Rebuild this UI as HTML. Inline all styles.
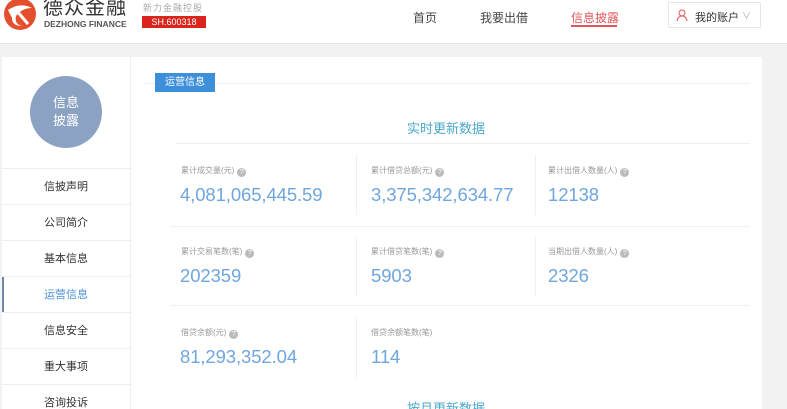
<!DOCTYPE html><html><head><meta charset="utf-8"><style>
*{margin:0;padding:0;box-sizing:border-box}
html,body{width:787px;height:409px;overflow:hidden}
body{background:#f2f2f2;font-family:"Liberation Sans","Noto Sans CJK SC",sans-serif;position:relative}
.a{position:absolute}
.hdr{left:0;top:0;width:787px;height:44px;background:#fff;border-bottom:1px solid #e4e4e4}
.nav{font-size:12px;color:#444;top:9px}
.side{left:2px;top:57px;width:128px;height:360px;background:#fff}
.main{left:130px;top:57px;width:632px;height:360px;background:#fff;border-left:1px solid #eee}
.mi{left:2px;width:128px;height:36px;border-top:1px solid #eee;font-size:11px;color:#333;text-align:center;line-height:36px}
.lb{font-size:8px;color:#999}
.lb i{display:inline-block;width:9px;height:9px;border-radius:50%;background:#bbb;color:#fff;font-style:normal;font-size:7px;text-align:center;line-height:9px;margin-left:3px;vertical-align:-1px}
.v{font-size:18.5px;color:#6fa6de;letter-spacing:-0.1px}
.hl{height:1px;background:#f0f0f0}
.vl{width:1px;background:#f0f0f0}
</style></head><body>
<div class="a hdr"></div>
<svg class="a" style="left:2px;top:-4px" width="36" height="36" viewBox="0 0 36 36"><circle cx="18" cy="18" r="16" fill="#e4502e"/><path d="M6 14 Q18 6 30 12 Q20 12 14 20 Q12 28 20 30 Q10 30 10 22" fill="#fff"/><path d="M14 14 L26 28" stroke="#fff" stroke-width="3"/></svg>
<div class="a" style="left:43px;top:-3px;font-size:20px;line-height:22px;color:#333;letter-spacing:1px">德众金融</div>
<div class="a" style="left:44px;top:20px;font-size:8.5px;line-height:9px;color:#555;font-weight:bold">DEZHONG FINANCE</div>
<div class="a" style="left:143px;top:1px;font-size:9px;color:#aaa;letter-spacing:1px">新力金融控股</div>
<div class="a" style="left:142px;top:16px;width:64px;height:12px;background:#d9251c;color:#fff;font-size:9px;text-align:center;line-height:12px">SH.600318</div>
<div class="a nav" style="left:413px">首页</div>
<div class="a nav" style="left:480px">我要出借</div>
<div class="a nav" style="left:571px;color:#e0555a">信息披露</div>
<div class="a" style="left:571px;top:25px;width:46px;height:2px;background:#e0555a"></div>
<div class="a" style="left:668px;top:2px;width:93px;height:26px;border:1px solid #e6e6e6;border-radius:2px;background:#fff"></div>
<svg class="a" style="left:676px;top:9px" width="12" height="12" viewBox="0 0 12 12"><circle cx="6" cy="4" r="3" fill="none" stroke="#e0555a"/><path d="M1 12 Q2 7 6 7 Q10 7 11 12" fill="none" stroke="#e0555a"/></svg>
<div class="a" style="left:695px;top:9px;font-size:11px;color:#333">我的账户</div>
<div class="a" style="left:742px;top:9px;font-size:9px;color:#aaa">∨</div>
<div class="a side"></div>
<div class="a main"></div>
<div class="a" style="left:30px;top:76px;width:72px;height:72px;border-radius:50%;background:#8ca2c2;color:#fff;font-size:13px;text-align:center;line-height:18px;padding-top:18px">信息<br>披露</div>
<div class="a mi" style="top:168px">信披声明</div>
<div class="a mi" style="top:204px">公司简介</div>
<div class="a mi" style="top:240px">基本信息</div>
<div class="a mi" style="top:276px;color:#4a90d9">运营信息</div>
<div class="a" style="left:2px;top:277px;width:2px;height:36px;background:#7088a8"></div>
<div class="a mi" style="top:312px">信息安全</div>
<div class="a mi" style="top:348px">重大事项</div>
<div class="a mi" style="top:384px">咨询投诉</div>
<div class="a hl" style="left:145px;top:83px;width:605px;background:#eee"></div>
<div class="a" style="left:155px;top:73px;width:60px;height:19px;background:#3d8fd9;color:#fff;font-size:10px;text-align:center;line-height:19px">运营信息</div>
<div class="a" style="left:407px;top:118px;font-size:13px;color:#4aa8c8">实时更新数据</div>
<div class="a hl" style="left:175px;top:143px;width:575px"></div>
<div class="a hl" style="left:170px;top:226px;width:580px"></div>
<div class="a hl" style="left:170px;top:305px;width:580px"></div>
<div class="a vl" style="left:356px;top:155px;height:60px"></div>
<div class="a vl" style="left:535px;top:155px;height:60px"></div>
<div class="a vl" style="left:356px;top:237px;height:60px"></div>
<div class="a vl" style="left:535px;top:237px;height:60px"></div>
<div class="a vl" style="left:356px;top:318px;height:60px"></div>
<div class="a lb" style="left:181px;top:165px">累计成交量(元)<i>?</i></div>
<div class="a v" style="left:180px;top:184px">4,081,065,445.59</div>
<div class="a lb" style="left:371px;top:165px">累计借贷总额(元)<i>?</i></div>
<div class="a v" style="left:371px;top:184px">3,375,342,634.77</div>
<div class="a lb" style="left:548px;top:165px">累计出借人数量(人)<i>?</i></div>
<div class="a v" style="left:548px;top:184px">12138</div>
<div class="a lb" style="left:181px;top:246px">累计交易笔数(笔)<i>?</i></div>
<div class="a v" style="left:180px;top:265px">202359</div>
<div class="a lb" style="left:371px;top:246px">累计借贷笔数(笔)<i>?</i></div>
<div class="a v" style="left:371px;top:265px">5903</div>
<div class="a lb" style="left:548px;top:246px">当期出借人数量(人)<i>?</i></div>
<div class="a v" style="left:548px;top:265px">2326</div>
<div class="a lb" style="left:181px;top:327px">借贷余额(元)<i>?</i></div>
<div class="a v" style="left:180px;top:346px">81,293,352.04</div>
<div class="a lb" style="left:371px;top:327px">借贷余额笔数(笔)</div>
<div class="a v" style="left:371px;top:346px">114</div>
<div class="a" style="left:407px;top:398px;font-size:13px;color:#4aa8c8">按月更新数据</div>
</body></html>
